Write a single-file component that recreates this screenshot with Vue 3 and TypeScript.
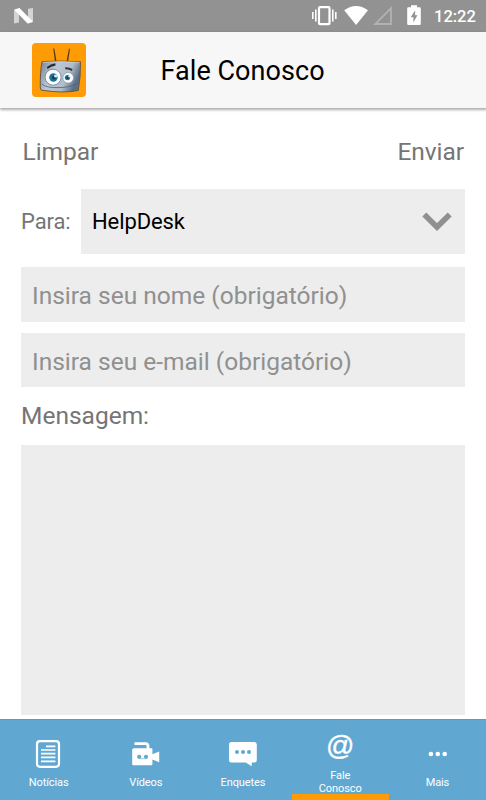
<script setup lang="ts">
import { ref } from 'vue'

interface Tab {
  id: string
  label: string
}

const tabs: Tab[] = [
  { id: 'news', label: 'Notícias' },
  { id: 'videos', label: 'Vídeos' },
  { id: 'polls', label: 'Enquetes' },
  { id: 'contact', label: 'Fale Conosco' },
  { id: 'more', label: 'Mais' },
]

const active = ref<string>('contact')
const name = ref<string>('')
const email = ref<string>('')
const message = ref<string>('')

function clearForm(): void {
  name.value = ''
  email.value = ''
  message.value = ''
}
</script>

<template>
  <div class="screen">
    <div class="status">
      <svg class="nougat" width="20" height="16" viewBox="0 0 20 16">
        <path d="M0 2L5 0V14.5L0 15.5Z M14 0.8L19 0V14L14 15.5Z" fill="#d4d4d4" />
        <path d="M0.3 1.8L5.5 0L19 13.7L13.6 15.6Z" fill="#fff" />
      </svg>
      <svg class="indicators" width="112" height="22" viewBox="311 5 112 22">
        <rect x="319" y="7.2" width="10.5" height="17" rx="1" fill="none" stroke="#fff" stroke-width="2.2" />
        <path d="M315.8 9.5V21.5M332.8 9.5V21.5M312.8 12V19M335.8 12V19" fill="none" stroke="#fff" stroke-width="1.6" />
        <path d="M344.2 10.3Q356 1.5 368 10.3L356.1 25Z" fill="#fff" />
        <path d="M391 8.2V24H375.3Z" fill="none" stroke="#b2b2b2" stroke-width="1.8" />
        <path d="M411 5.2h6v2h2.6q1.2 0 1.2 1.2v15.4q0 1.2-1.2 1.2h-11.2q-1.2 0-1.2-1.2v-15.4q0-1.2 1.2-1.2h2.6z" fill="#fff" />
        <path d="M415.2 10.2L410.7 17.2H413.4V22.6L417.4 15.2H415.1Z" fill="#929292" />
      </svg>
      <span class="clock">12:22</span>
    </div>

    <header class="header">
      <svg class="logo" width="54" height="54" viewBox="0 0 54 54">
        <defs>
          <linearGradient id="metal" x1="0" y1="0" x2="1" y2="0.35">
            <stop offset="0" stop-color="#748398" />
            <stop offset="0.4" stop-color="#bcc7d5" />
            <stop offset="0.75" stop-color="#b2bdcc" />
            <stop offset="1" stop-color="#5d6f85" />
          </linearGradient>
        </defs>
        <rect width="54" height="54" rx="4" fill="#ff9b04" />
        <path d="M21.2 5.5L22.4 5.6L24.6 19H23ZM37 5.5L38 5.7L36 19H34.4Z" fill="#5b3c17" />
        <path d="M10 18.6Q29 17.4 48.5 18.8Q48.8 33 46.3 47.4Q32 50.7 9.2 47.1L8.3 45Q8 29 10 18.6Z" fill="url(#metal)" stroke="#5c5340" stroke-width="0.9" />
        <path d="M10.8 19.3Q29 18 47.3 19.4" fill="none" stroke="#d5dce3" stroke-width="0.7" />
        <path d="M9.5 41Q15 45 25 44.6Q37 45 46 40" fill="none" stroke="#526176" stroke-width="0.8" />
        <circle cx="21.1" cy="34.2" r="8" fill="#fff" stroke="#687a8c" stroke-width="0.8" />
        <circle cx="36.2" cy="34.8" r="5.3" fill="#fff" stroke="#8795a5" stroke-width="0.7" />
        <circle cx="21.4" cy="34.5" r="4.2" fill="#16779d" />
        <circle cx="22.1" cy="34.5" r="2.1" fill="#123d50" />
        <circle cx="23.6" cy="33" r="1.6" fill="#d5edf4" />
        <circle cx="35.5" cy="34.6" r="2.7" fill="#16779d" />
        <circle cx="35.8" cy="34.7" r="1.3" fill="#123d50" />
        <circle cx="37.2" cy="33.5" r="1" fill="#d5edf4" />
        <path d="M14.9 24Q18.6 20.9 23.3 20.2L23.6 22.4Q19 23.2 15.5 26Z" fill="#252c34" />
        <path d="M33.3 24.3Q37 24 40.5 26.1L39.9 28Q36.5 26 33.1 26.3Z" fill="#393840" />
      </svg>
      <h1 class="title">Fale Conosco</h1>
    </header>

    <main class="form">
      <div class="actions">
        <button type="button" class="action" @click="clearForm">Limpar</button>
        <button type="button" class="action">Enviar</button>
      </div>
      <div class="to">
        <span class="to-label">Para:</span>
        <div class="select">
          <span>HelpDesk</span>
          <svg width="30" height="20" viewBox="0 0 30 20">
            <path d="M2.3 2.5L15 15L27.7 2.5" fill="none" stroke="#909090" stroke-width="5.6" />
          </svg>
        </div>
      </div>
      <input v-model="name" class="field" type="text" placeholder="Insira seu nome (obrigatório)" />
      <input v-model="email" class="field second" type="text" placeholder="Insira seu e-mail (obrigatório)" />
      <label class="message-label" for="message">Mensagem:</label>
      <textarea id="message" v-model="message" class="message"></textarea>
    </main>

    <nav class="tabs">
      <button
        v-for="tab in tabs"
        :key="tab.id"
        type="button"
        class="tab"
        :class="{ active: tab.id === active }"
        @click="active = tab.id"
      >
        <svg v-if="tab.id === 'news'" class="icon news" width="30" height="30" viewBox="0 0 30 30">
          <rect x="4" y="2.2" width="22" height="25.6" rx="3" fill="none" stroke="#fff" stroke-width="2.2" />
          <path d="M13 7.3H22.4M8 11H22.4M8 14.7H22.4M8 18.4H22.4M8 22.3H22.4" stroke="#fff" stroke-width="1.7" />
        </svg>
        <svg v-else-if="tab.id === 'videos'" class="icon" width="30" height="30" viewBox="0 0 30 30">
          <path d="M3.5 4.6H14.5Q17 4.6 17 7V11" fill="none" stroke="#fff" stroke-width="2.8" />
          <path d="M2.4 9.2H20.4Q21.4 9.2 21.4 10V15.3L28.2 12.4V23.2L21.4 20.6V25.2Q21.4 26.2 20.4 26.2H2.2Q1.2 26.2 1.2 25.2V10.2Z" fill="#fff" />
          <circle cx="8.2" cy="17.8" r="2.1" fill="#60a8d2" />
          <circle cx="15" cy="17.8" r="2.1" fill="#60a8d2" />
          <path d="M8.5 19.7H15" stroke="#60a8d2" stroke-width="0.6" />
        </svg>
        <svg v-else-if="tab.id === 'polls'" class="icon" width="30" height="30" viewBox="0 0 30 30">
          <path d="M3.5 3H26.5Q28.8 3 28.8 5.5V21Q28.8 23.5 26.5 23.5H23.7V27.3L17.8 23.5H3.5Q1 23.5 1 21V5.5Q1 3 3.5 3Z" fill="#fff" />
          <circle cx="9" cy="13" r="2" fill="#60a8d2" />
          <circle cx="15" cy="13" r="2" fill="#60a8d2" />
          <circle cx="21" cy="13" r="2" fill="#60a8d2" />
        </svg>
        <span v-else-if="tab.id === 'contact'" class="at">@</span>
        <svg v-else class="icon" width="30" height="30" viewBox="0 0 30 30">
          <circle cx="8.9" cy="15" r="2.3" fill="#fff" />
          <circle cx="15.8" cy="15" r="2.3" fill="#fff" />
          <circle cx="22.7" cy="15" r="2.3" fill="#fff" />
        </svg>
        <span class="tab-label">{{ tab.label }}</span>
      </button>
    </nav>
  </div>
</template>

<style>
body {
  background: #fff;
}
</style>

<style scoped>
.screen {
  box-sizing: border-box;
  width: 486px;
  height: 800px;
  display: flex;
  flex-direction: column;
  overflow: hidden;
  background: #fff;
  font-family: Roboto, sans-serif;
  color: #757575;
}
.screen * {
  box-sizing: border-box;
}
button,
input,
textarea {
  font: inherit;
  color: inherit;
  border: 0;
  border-radius: 0;
  padding: 0;
  margin: 0;
  background: none;
  outline: none;
}
.status {
  height: 31.5px;
  flex: none;
  display: flex;
  align-items: flex-start;
  background: #929292;
  color: #fff;
}
.nougat {
  margin: 8px 0 0 14px;
}
.indicators {
  margin: 5px 0 0 auto;
}
.clock {
  width: 63px;
  padding-left: 11px;
  font-size: 16.5px;
  font-weight: 500;
  line-height: 33px;
}
.header {
  height: 76px;
  flex: none;
  display: flex;
  align-items: flex-start;
  background: #f7f7f7;
  box-shadow: 0 1px 2.5px 0.5px rgba(0, 0, 0, 0.32);
  padding: 11.5px 32px;
  z-index: 1;
}
.logo {
  flex: none;
}
.title {
  margin: 0 0 0 74.5px;
  font-size: 27px;
  font-weight: 400;
  line-height: 57px;
  letter-spacing: 0.05px;
  color: #000;
  white-space: nowrap;
}
.form {
  flex: 1;
  display: flex;
  flex-direction: column;
  padding: 27.5px 21px 4px;
}
.actions {
  height: 54px;
  display: flex;
  justify-content: space-between;
  align-items: flex-start;
  padding: 0 1px 0 1.5px;
}
.action {
  font-size: 24.5px;
  line-height: 34px;
  letter-spacing: -0.05px;
}
.to {
  height: 64.5px;
  flex: none;
  display: flex;
  align-items: center;
}
.to-label {
  width: 60px;
  padding-top: 1px;
  font-size: 22px;
  letter-spacing: -0.1px;
}
.select {
  flex: 1;
  height: 100%;
  display: flex;
  align-items: center;
  justify-content: space-between;
  padding: 1px 13px 0 11px;
  background: #ededed;
  color: #000;
  font-size: 22px;
  letter-spacing: -0.1px;
}
.field {
  display: block;
  flex: none;
  width: 100%;
  height: 55px;
  margin-top: 13.5px;
  padding: 1px 11px 0;
  background: #ededed;
  font-size: 24.5px;
}
.field.second {
  height: 54px;
  margin-top: 11px;
  padding-top: 3px;
}
.field::placeholder {
  color: #909090;
  opacity: 1;
}
.message-label {
  flex: none;
  height: 58px;
  font-size: 24.5px;
  line-height: 58px;
}
.message {
  flex: 1;
  width: 100%;
  resize: none;
  background: #ededed;
  padding: 11px;
  font-size: 24.5px;
}
.tabs {
  height: 81px;
  flex: none;
  display: flex;
  background: #60a8d2;
  border-top: 1px solid #519fc9;
  color: #fff;
}
.tab {
  flex: 1 1 0;
  min-width: 0;
  display: flex;
  flex-direction: column;
  align-items: center;
  padding-top: 19px;
}
.tab.active {
  padding-top: 9px;
  border-bottom: 6.5px solid #ff9b04;
}
.icon {
  flex: none;
}
.news {
  margin-left: -1px;
}
.at {
  flex: none;
  height: 36px;
  font-family: "Liberation Sans", sans-serif;
  font-size: 28px;
  line-height: 34px;
  -webkit-text-stroke: 0.4px #fff;
}
.tab-label {
  width: 50px;
  margin-top: 7px;
  font-size: 11px;
  line-height: 13px;
  letter-spacing: -0.1px;
  text-align: center;
}
.active .tab-label {
  margin-top: 4px;
}
</style>
